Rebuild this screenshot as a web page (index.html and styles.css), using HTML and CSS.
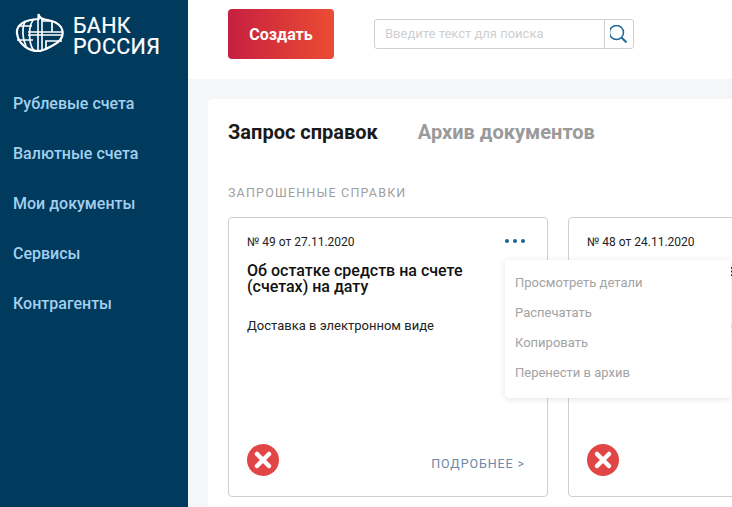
FILE: index.html
```html
<!DOCTYPE html>
<html lang="ru">
<head>
<meta charset="utf-8">
<title>Запрос справок</title>
<link rel="stylesheet" href="styles.css">
</head>
<body>
<div class="app">
  <aside class="sidebar">
    <div class="logo">
      <svg class="logo-mark" width="50" height="40" viewBox="0 0 50 40" fill="none" stroke="#fff">
        <path d="M23.500 1c.5 3 3 5 6.500 5.500 7 1 16 4 17.500 11.500 1 6-3 11-9 14-5 2.500-10 6-15.500 6-8 0-20-6-21-18C1 12 10 6.500 23.500 6z" stroke-width="2.200"/>
        <path d="M3 13h14M2 27h16M10 8c-3 7-3 17 1 25M19 6c-6 6-6 24 0 32" stroke-width="1.700"/>
        <path d="M23 6v33M27 6v32M13 19h34M13 22h34" stroke-width="1.600"/>
        <path d="M27 8h10v11M31 37V28h16" stroke-width="1.700"/>
      </svg>
      <div class="logo-text">БАНК<br>РОССИЯ</div>
    </div>
    <nav class="nav">
      <a class="nav-item">Рублевые счета</a>
      <a class="nav-item">Валютные счета</a>
      <a class="nav-item">Мои документы</a>
      <a class="nav-item">Сервисы</a>
      <a class="nav-item">Контрагенты</a>
    </nav>
  </aside>
  <main class="main">
    <header class="topbar">
      <button class="create">Создать</button>
      <div class="search">
        <div class="search-input">Введите текст для поиска</div>
        <div class="search-btn">
          <svg width="20" height="20" viewBox="0 0 20 20" fill="none" stroke="#1d6796" stroke-width="1.500">
            <circle cx="6.500" cy="7.500" r="7"/>
            <path d="M11.500 12.500l5 5" stroke-width="2"/>
          </svg>
        </div>
      </div>
    </header>
    <section class="panel">
      <div class="tabs">
        <span class="tab tab-active">Запрос справок</span>
        <span class="tab">Архив документов</span>
      </div>
      <h2 class="section-title">ЗАПРОШЕННЫЕ СПРАВКИ</h2>
      <div class="cards">
        <article class="card">
          <div class="card-head">
            <span class="card-num">№ 49 от 27.11.2020</span>
            <span class="dots"><i></i><i></i><i></i></span>
          </div>
          <h3 class="card-title">Об остатке средств на счете (счетах) на дату</h3>
          <p class="card-desc">Доставка в электронном виде</p>
          <div class="card-foot">
            <svg class="status" width="32" height="32" viewBox="0 0 32 32">
              <circle cx="16" cy="16" r="16" fill="#e04646"/>
              <path d="M10 10l12 12M22 10L10 22" stroke="#fff" stroke-width="4.500" stroke-linecap="round"/>
            </svg>
            <a class="more">ПОДРОБНЕЕ &gt;</a>
          </div>
          <ul class="menu">
            <li>Просмотреть детали</li>
            <li>Распечатать</li>
            <li>Копировать</li>
            <li>Перенести в архив</li>
          </ul>
        </article>
        <article class="card">
          <div class="card-head">
            <span class="card-num">№ 48 от 24.11.2020</span>
          </div>
          <h3 class="card-title">Об остатке средств на счете (счетах) на дату</h3>
          <p class="card-desc">Доставка в электронном виде</p>
          <div class="card-foot">
            <svg class="status" width="32" height="32" viewBox="0 0 32 32">
              <circle cx="16" cy="16" r="16" fill="#e04646"/>
              <path d="M10 10l12 12M22 10L10 22" stroke="#fff" stroke-width="4.500" stroke-linecap="round"/>
            </svg>
            <a class="more">ПОДРОБНЕЕ &gt;</a>
          </div>
        </article>
      </div>
    </section>
  </main>
</div>
</body>
</html>
```
FILE: styles.css
```css
* { box-sizing: border-box; }
html, body { margin: 0; height: 100%; overflow: hidden; }
body { font-family: Roboto, "Liberation Sans", sans-serif; background: #f4f6f8; }
.app { display: flex; width: 732px; height: 507px; overflow: hidden; }

.sidebar { flex: 0 0 188px; background: #003a5d; }
.logo { display: flex; align-items: flex-start; gap: 8px; padding: 13px 0 0 15px; height: 89px; }
.logo-mark { display: block; flex: none; }
.logo-text { color: #fff; font-size: 21.500px; line-height: 21px; letter-spacing: 0.3px; padding-top: 2px; -webkit-text-stroke: 0.2px #fff; }
.nav { display: flex; flex-direction: column; }
.nav-item { height: 50px; padding-left: 13px; color: #a3d0ee; font-size: 16px; font-weight: 500; line-height: 30px; }

.main { flex: 1; min-width: 0; }
.topbar { display: flex; align-items: center; height: 79px; padding: 0 0 11px 40px; background: #fff; margin-bottom: 20px; gap: 40px; }
.create { width: 106px; height: 50px; border: 0; border-radius: 4px; color: #fff; font: 700 16px Roboto, sans-serif; background: linear-gradient(90deg, #c62040, #ec4c33); padding: 0; }
.search { display: flex; width: 260px; height: 30px; border: 1px solid #ced1d4; border-radius: 3px; }
.search-input { flex: 1; padding-left: 10px; color: #cfcfcf; font-size: 13px; line-height: 28px; }
.search-btn { width: 29px; border-left: 1px solid #ced1d4; display: flex; align-items: center; justify-content: center; padding: 2px 0 0 2px; }

.panel { margin-left: 20px; height: 420px; padding: 19px 20px 20px; background: #fff; border-radius: 4px; width: 560px; }
.tabs { display: flex; gap: 40px; height: 28px; }
.tab { color: #9a9a9a; font-size: 20px; font-weight: 700; line-height: 28px; }
.tab-active { color: #1a1a1a; }
.section-title { margin: 0; padding-top: 39px; height: 71px; color: #a0a0a0; font-size: 12.500px; font-weight: 400; letter-spacing: 1.200px; line-height: 16px; }
.cards { display: flex; gap: 20px; }
.card { position: relative; flex: 0 0 320px; height: 280px; padding: 16px 18px 0; border: 1px solid #cfcfcf; border-radius: 4px; background: #fff; display: flex; flex-direction: column; }
.card-head { display: flex; justify-content: space-between; align-items: center; height: 16px; }
.card-num { color: #222; font-size: 12px; }
.dots { display: flex; gap: 4px; margin: -2px 4px 0 0; }
.dots i { width: 4px; height: 4px; border-radius: 50%; background: #1d6796; }
.card-title { margin: 13px 0 0; color: #111; font-size: 16px; font-weight: 500; line-height: 16px; width: 240px; }
.card-desc { margin: 23px 0 0; color: #222; font-size: 13px; line-height: 16px; }
.card-foot { display: flex; justify-content: space-between; align-items: center; margin-top: auto; padding: 0 4px 20px 0; }
.status { display: block; }
.more { color: #6b89a8; font-size: 12.500px; letter-spacing: 0.900px; padding-top: 6px; }
.menu { position: absolute; z-index: 2; left: 276px; top: 42px; width: 226px; height: 138px; margin: 0; padding: 8px 10px; list-style: none; background: #fff; border-radius: 4px; box-shadow: 0 1px 6px rgba(60, 90, 120, 0.16); }
.menu li { color: #a3a3a3; font-size: 13px; line-height: 30px; }
```
